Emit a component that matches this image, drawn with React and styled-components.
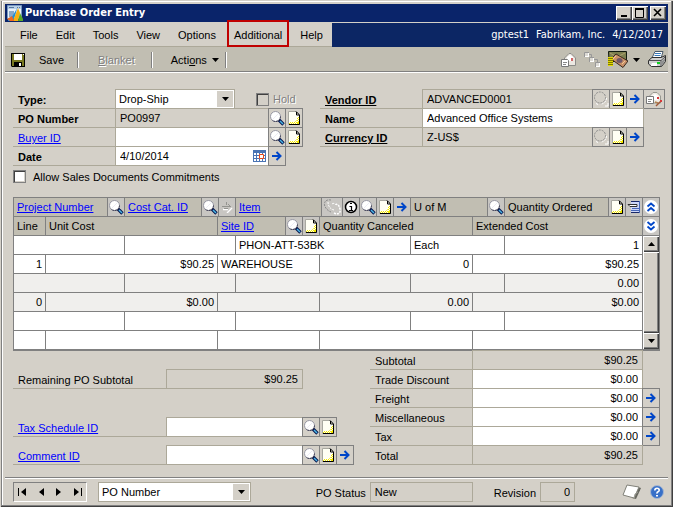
import React from 'react';
import styled, { createGlobalStyle, css } from 'styled-components';

const theme = {
  face: '#d4d0c8',
  bar: '#c1beb2',
  navy: '#0a246a',
  line: '#808080',
  softLine: '#aca899',
  link: '#0000ff',
  arrow: '#0046c8',
  alert: '#c00000',
};

const GlobalStyle = createGlobalStyle`
  * {
    box-sizing: border-box;
  }
  body {
    margin: 0;
    background: ${theme.face};
    color: #000;
    font: 11px/14px 'Liberation Sans', Arial, sans-serif;
  }
  button, input, select {
    font: inherit;
    color: inherit;
    margin: 0;
    padding: 0;
    border: 0;
    border-radius: 0;
    background: none;
  }
  svg {
    display: block;
    flex: none;
  }
`;

/* ---------- icons ---------- */

function Icon({ w = 16, h = 16, children }) {
  return (
    <svg width={w} height={h} viewBox={`0 0 ${w} ${h}`} fill="none" aria-hidden="true">
      {children}
    </svg>
  );
}

const SearchIcon = () => (
  <Icon>
    <path d="M9.5 9.5l5 5" stroke="#081850" strokeWidth="3.4" />
    <path d="M11 11l3 3" stroke="#48b8e8" strokeWidth="1.4" />
    <circle cx="6.5" cy="6.5" r="5" fill="#fff" stroke="#9898a4" />
    <path d="M11.5 6.5a5 5 0 0 1-5 5a5 5 0 0 1-3-1" stroke="#303048" strokeDasharray="2 0.6" />
    <path d="M4 9l5-5" stroke="#ececf4" />
  </Icon>
);

const GhostSearchIcon = () => (
  <Icon>
    <circle cx="7" cy="6.5" r="5.5" stroke="#8c8c8c" strokeDasharray="2 1" />
    <path d="M13.5 7a6 6 0 0 1-6 6" stroke="#fff" strokeDasharray="2 1" />
    <path d="M12 15h3v-3M3 12.5l2 1" stroke="#fff" />
  </Icon>
);

const ItemGhostIcon = () => (
  <Icon w={19} h={17}>
    <path d="M8 1C3 0 1 3 1.5 6S5 12 8 13" stroke="#8c8c8c" strokeDasharray="2 1" />
    <path d="M5 3c0 4 2 7 6 8M9 5c1-1 3-1 4 1" stroke="#fff" strokeDasharray="2 1" />
    <path d="M11 14c4 2 7 0 6-4s-2-4-4-5" stroke="#fff" strokeWidth="1.5" strokeDasharray="2 1" />
  </Icon>
);

const PageIcon = () => (
  <Icon w={12} h={14}>
    <path d="M0.5 0.5h8l3 3v10h-11z" fill="#fffff4" stroke="#a8a8a0" />
    <path d="M8 0.5l3.5 3.5v9.5H1" stroke="#000" />
    <path d="M8.5 1v3H11" stroke="#000" />
    <path d="M1 12.5h9M10.5 13V5" stroke="#f4e800" strokeDasharray="1 1" />
    <path d="M2 11.5h9M9.5 12V6" stroke="#f4e800" strokeDasharray="1 1" />
    <path d="M7 10.5h2M8.5 9v1" stroke="#f8f060" strokeDasharray="1 1" />
  </Icon>
);

const ArrowIcon = () => (
  <Icon w={10} h={10}>
    <path d="M0 5h8M4.5 1l4 4-4 4" stroke={theme.arrow} strokeWidth="2" />
  </Icon>
);

const GhostArrowIcon = () => (
  <Icon w={12} h={12}>
    <path d="M2 8.5h5M6 12l5-5" stroke="#fff" strokeWidth="1.4" />
    <path d="M5.5 1v3M1 5.5h8M3 7.5h4M7 3l3 3" stroke="#949490" />
  </Icon>
);

const InfoIcon = () => (
  <Icon w={14} h={14}>
    <circle cx="7" cy="7" r="5.5" fill="#fff" stroke="#000" strokeWidth="1.5" />
    <path d="M6 3.5h2M5.5 6.5h2v4M5 10.5h4" stroke="#000" strokeWidth="1.2" />
  </Icon>
);

const NoteIcon = () => (
  <Icon w={14} h={14}>
    <path d="M4 1h9v11H4z" fill="#cfd8f8" />
    <path d="M4 1.5h9M4 12.5h9" stroke="#182868" />
    <path d="M12.5 1v12M5 8.5h7M4 10.5h8" stroke="#4868b8" />
    <path d="M1 4.5h9v2H3z" fill="#fff" stroke="#303030" />
  </Icon>
);

const CalendarIcon = () => (
  <Icon w={13} h={12}>
    <path d="M0 0h13v12H0z" fill="#4a74b4" />
    <path d="M1 3h2v2H1zM4 3h2v2H4zM7 3h2v2H7zM10 3h2v2h-2zM1 6h2v2H1zM4 6h2v2H4zM10 6h2v2h-2zM1 9h2v2H1zM4 9h2v2H4zM7 9h2v2H7zM10 9h2v2h-2z" fill="#fff" />
    <path d="M6.5 4.5h4v4h-4z" fill="#fff" stroke="#e84818" />
  </Icon>
);

const ChevronsIcon = ({ down }) => (
  <Icon w={14} h={14}>
    <circle cx="7" cy="7" r="7" fill="#fff" />
    <path
      d={down ? 'M3.5 3L7 6l3.5-3M3.5 7.5l3.5 3 3.5-3' : 'M3.5 6.5L7 3.5l3.5 3M3.5 11L7 8l3.5 3'}
      stroke={theme.arrow}
      strokeWidth="1.8"
    />
  </Icon>
);

const Triangle = ({ dir = 'down' }) => (
  <Icon w={7} h={8}>
    {dir === 'down' && <path d="M0 2h7L3.5 6z" fill="#000" />}
    {dir === 'up' && <path d="M0 6h7L3.5 2z" fill="#000" />}
    {dir === 'left' && <path d="M6 0v8L1 4z" fill="#000" />}
    {dir === 'right' && <path d="M1 0v8l5-4z" fill="#000" />}
  </Icon>
);

const EndIcon = ({ dir }) => (
  <Icon w={9} h={8}>
    {dir === 'first' && <path d="M0 0h1v8H0zM8 0v8L3 4z" fill="#000" />}
    {dir === 'last' && <path d="M8 0h1v8H8zM1 0v8l5-4z" fill="#000" />}
  </Icon>
);

const AppIcon = () => (
  <Icon>
    <path d="M0.5 0.5h14v13h-14z" fill="#e8f0fa" stroke="#7898c0" />
    <path d="M1 1h13v3H1z" fill="#b8d0e8" />
    <path d="M2 2.5h5M10 2.5h1M12 2.5h1" stroke="#5878a0" />
    <path d="M2 6h5v6H2z" fill="#88a8c8" />
    <path d="M1 14c4-1 6-5 9-11-1 5-2 9-4 13H1z" fill="#2090d8" />
    <path d="M6 16l5-13 2 5-2 8z" fill="#f8b010" />
    <path d="M11 16l2-8 3 6v2z" fill="#58a828" />
    <path d="M0 14l5-3 2 5H3z" fill="#f06820" />
  </Icon>
);

const FloppyIcon = () => (
  <Icon w={14} h={14}>
    <path d="M0 0h14v14H1L0 13z" fill="#000" />
    <path d="M1 1h12v12H1z" fill="#787820" />
    <path d="M3 1h8v6H3z" fill="#fff" />
    <path d="M3 9h8v5H3z" fill="#000" />
    <path d="M8 10h2v3H8z" fill="#fff" />
    <path d="M12 1h1v1h-1z" fill="#fff" />
  </Icon>
);

const MailIcon = () => (
  <Icon w={15} h={14}>
    <path d="M3.5 5L8 0.5h2L14.5 5v7.5h-11z" fill="#ece8e2" stroke="#8c8c88" />
    <path d="M6 4l3-2 3 2v4H6z" fill="#fff" />
    <path d="M10 5h2v3h-2z" fill="#d06868" />
    <path d="M0.5 6.5h6l1 1v6h-7z" fill="#fff" stroke="#787878" />
    <path d="M2 9.5h4M2 11.5h3" stroke="#888" />
  </Icon>
);

const MailEditIcon = () => (
  <Icon w={16} h={16}>
    <path d="M3.5 5L7 1.5h4L14.5 5v7h-11z" fill="#f0ece4" stroke="#989890" />
    <path d="M6 5l3-2 3 2v4H6z" fill="#fff" />
    <path d="M0.5 5.5h7v7h-7z" fill="#fff" stroke="#787878" />
    <path d="M2 8.5h4M2 10.5h3" stroke="#888" />
    <path d="M11 6h2v2h-2z" fill="#d83838" />
    <path d="M9 11l3 1" stroke="#b08050" strokeWidth="1.5" />
    <path d="M10 15l5-5" stroke="#a05838" strokeWidth="1.5" />
    <path d="M14 9h2v2h-2z" fill="#d83838" />
  </Icon>
);

const WorkflowIcon = () => (
  <Icon w={16} h={15}>
    <path d="M5 2.5h2.5v3M10 7.5h3.5v3" stroke="#989898" />
    <path d="M1 1h4v4H1zM6 6h4v4H6zM12 11h4v4h-4z" fill="#fff" />
    <path d="M1 1h3v3H1zM6 6h3v3H6zM12 11h3v3h-3z" fill="#dcdad4" />
    <path d="M0.5 5V0.5H5M5.5 10V5.5H10M11.5 15v-4.5H16" stroke="#989898" />
  </Icon>
);

const MoneyIcon = () => (
  <Icon w={20} h={17}>
    <path d="M0.5 0.5h18v10H1z" fill="#7c8050" stroke="#101810" />
    <path d="M2 2l7 4 8-4" stroke="#b0a070" />
    <path d="M3 8l5-5 12 7-5 6.5z" fill="#c89068" stroke="#382820" />
    <ellipse cx="11.5" cy="9.5" rx="3" ry="2.5" fill="#705868" />
    <path d="M5 8l3-3M14 13l3-3" stroke="#f0c898" />
    <path d="M0 6h5v9H0z" fill="#e0d800" />
    <path d="M0 7.5h5M0 9.5h5M0 11.5h5M0 13.5h5" stroke="#807800" />
  </Icon>
);

const PrinterIcon = () => (
  <Icon w={18} h={17}>
    <path d="M4 7L7 0.5h8l-2 7z" fill="#fff" stroke="#485868" />
    <path d="M7 2.5h6M6.5 4.5h6" stroke="#3878b8" />
    <path d="M0.5 9.5L4 6.5h9l4.5-2v6l-4 5h-10L0.5 13z" fill="#d0d0d0" stroke="#303030" />
    <path d="M1 9.5h12v6M13 9.5L17 6" stroke="#505050" />
    <path d="M14 10l3-3v3l-3 4z" fill="#909090" />
    <path d="M3 14l1-2h5v3H3z" fill="#fff" />
    <path d="M9 11h3v2H9z" fill="#10d020" />
  </Icon>
);

const TiltedNoteIcon = () => (
  <Icon w={19} h={16}>
    <path d="M16 3l3 1-5 11-4-1z" fill="#686860" />
    <path d="M5 1l12 2-5 11-11-3z" fill="#fff" stroke="#808078" />
    <path d="M12 14l1-4 3-2" stroke="#a0a098" />
  </Icon>
);

const HelpIcon = () => (
  <Icon w={14} h={14}>
    <circle cx="7" cy="7" r="6.5" fill="#3870c8" stroke="#a8b8d0" />
    <path d="M4.8 5.5q0-2.3 2.2-2.3t2.2 2q0 1-1.2 1.6T7 8.6" stroke="#fff" strokeWidth="1.6" />
    <path d="M6 10h2v1.5H6z" fill="#fff" />
  </Icon>
);

/* ---------- window chrome ---------- */

const Window = styled.div`
  min-height: 100vh;
  padding: 4px 5px 5px;
  display: flex;
  flex-direction: column;
  background: ${theme.face};
  box-shadow: inset 1px 1px 0 ${theme.face}, inset -1px -1px 0 #404040,
    inset 2px 0 0 ${theme.line}, inset -2px -2px 0 ${theme.line}, inset 3px 2px 0 #fff;
`;

const TitleBar = styled.header`
  height: 18px;
  padding: 0 2px;
  display: flex;
  align-items: center;
  gap: 2px;
  background: ${theme.navy};
  color: #fff;
`;

const Title = styled.h1`
  margin: 0;
  flex: 1;
  font: bold 11px/16px 'DejaVu Sans Condensed', 'DejaVu Sans', sans-serif;
`;

const raised = css`
  background: ${theme.face};
  box-shadow: inset 1px 1px 0 #fff, inset -1px -1px 0 #404040, inset -2px -2px 0 ${theme.line};
`;

const WindowButtons = styled.div`
  display: flex;

  button:last-child {
    margin-left: 2px;
  }
`;

const WindowButton = styled.button`
  width: 16px;
  height: 14px;
  display: grid;
  place-items: center;
  ${raised}
`;

const MenuBar = styled.div`
  height: 24px;
  margin-top: 1px;
  display: flex;
  border-bottom: 1px solid ${theme.softLine};
`;

const Menu = styled.nav`
  display: flex;
  width: 327px;
  padding-left: 6px;
`;

const MenuItem = styled.button`
  position: relative;
  padding: 0 9px;

  ${({ $marked }) => $marked && css`
    &::after {
      content: '';
      position: absolute;
      inset: -3px 2px -1px;
      border: 2px solid ${theme.alert};
    }
  `}
`;

const Session = styled.div`
  flex: 1;
  margin-bottom: -1px;
  padding-right: 5px;
  display: flex;
  align-items: center;
  justify-content: flex-end;
  gap: 7px;
  background: #0c2664;
  color: #fff;
  font-family: 'DejaVu Sans Condensed', 'DejaVu Sans', sans-serif;
`;

const Toolbar = styled.div`
  height: 26px;
  padding: 0 2px 0 6px;
  display: flex;
  align-items: center;
  background: ${theme.bar};
  border-bottom: 1px solid #fff;
  box-shadow: inset 0 -1px 0 ${theme.line};
`;

const ToolButton = styled.button`
  display: flex;
  align-items: center;
  gap: 5px;

  &:disabled {
    color: ${theme.line};
    text-shadow: 1px 1px 0 #fff;
  }
`;

const SaveButton = styled(ToolButton)`
  gap: 14px;
`;

const Separator = styled.span`
  width: 2px;
  height: 16px;
  margin: 0 ${({ $after }) => $after}px 0 ${({ $before }) => $before}px;
  border-left: 1px solid ${theme.line};
  border-right: 1px solid #fff;
`;

const ToolIcons = styled.div`
  margin-left: auto;
  display: flex;
  align-items: center;
  gap: 8px;
`;

/* ---------- form ---------- */

const Main = styled.main`
  padding: 16px 8px 12px;
`;

const Form = styled.section`
  display: grid;
  grid-template-columns: 290fr 345fr;
  gap: 17px;
  margin-right: -5px;
`;

const Row = styled.div`
  height: 20px;
  margin-bottom: -1px;
  padding-right: ${({ $inset }) => $inset || 0}px;
  display: flex;

  &:last-child {
    margin-bottom: 0;
  }
`;

const Label = styled.label`
  width: ${({ $wide }) => ($wide ? 153 : 102)}px;
  flex: none;
  padding: 4px 0 0 5px;
  border-bottom: 1px solid ${theme.softLine};
  font-weight: ${({ $bold }) => ($bold ? 'bold' : 'normal')};
  text-decoration: ${({ $underline }) => ($underline ? 'underline' : 'none')};
  white-space: nowrap;
`;

const Link = styled.a`
  color: ${theme.link};
  white-space: nowrap;
`;

const Field = styled.div`
  flex: 1;
  min-width: 0;
  display: flex;
  align-items: center;
  border: 1px solid ${theme.softLine};
  background: ${({ $locked }) => ($locked ? theme.face : '#fff')};
`;

const TextInput = styled.input`
  width: 100%;
  min-width: 0;
  height: 18px;
  padding: 0 4px;
  outline: 0;
  text-align: ${({ $right }) => ($right ? 'right' : 'left')};
`;

const IconButton = styled.button`
  width: ${({ $width }) => $width || 18}px;
  flex: none;
  margin-left: -1px;
  display: grid;
  place-items: center;
  border: 1px solid ${theme.line};
  overflow: hidden;
`;

const PlainButton = styled.button`
  flex: none;
  padding-right: 2px;
`;

const SelectBox = styled.div`
  width: ${({ $width }) => $width}px;
  height: 20px;
  display: grid;
  border: 1px solid ${theme.softLine};
  background: #fff;
`;

const Select = styled.select`
  grid-area: 1 / 1;
  appearance: none;
  padding-left: 3px;
  outline: 0;
`;

const SelectArrow = styled.span`
  grid-area: 1 / 1;
  justify-self: end;
  width: 16px;
  margin: 1px;
  display: grid;
  place-items: center;
  background: ${theme.face};
  pointer-events: none;
`;

const CheckLabel = styled.label`
  display: flex;
  align-items: center;
  gap: ${({ $gap }) => $gap}px;
  ${({ $disabled }) => $disabled && css`
    margin-left: 21px;
    color: ${theme.line};
    text-shadow: 1px 1px 0 #fff;
  `}
`;

const CheckBox = styled.input`
  appearance: none;
  width: 13px;
  height: 13px;
  background: #fff;
  border: 1px solid ${theme.line};
  box-shadow: inset 1px 1px 0 #404040, inset -1px -1px 0 ${theme.face};

  &:disabled {
    background: ${theme.face};
  }
`;

const Commitments = styled.div`
  height: 13px;
  margin: 4px 0 14px;
  display: flex;
`;

/* ---------- line items ---------- */

const Grid = styled.table`
  width: 100%;
  table-layout: fixed;
  border-collapse: separate;
  border-spacing: 0;
  border: solid ${theme.line};
  border-width: 1px 0 1px 1px;

  th, td {
    height: 19px;
    padding: 0;
    border: solid ${theme.line};
    border-width: 0 1px 1px 0;
    text-align: left;
    font-weight: normal;
    white-space: nowrap;
  }
  th {
    background: ${theme.bar};
  }
`;

const Heading = styled.div`
  height: 18px;
  display: flex;
  align-items: center;

  > :first-child {
    flex: 1;
    padding-left: 3px;
  }
`;

const GridButton = styled.button`
  width: ${({ $width }) => $width || 17}px;
  height: 18px;
  display: grid;
  place-items: center;
  border-left: 1px solid ${theme.line};
  background: #c8c6c2;
  overflow: hidden;
`;

const ToggleButton = styled(GridButton)`
  width: 16px;
  border: 0;
`;

const Cell = styled.td`
  && {
    padding: 0 3px;
    background: ${({ $shaded }) => ($shaded ? '#f0efed' : '#fff')};
    text-align: ${({ $right }) => ($right ? 'right' : 'left')};
  }
`;

const ScrollBar = styled.div`
  height: 113px;
  display: flex;
  flex-direction: column;
`;

const ScrollButton = styled.button`
  height: 16px;
  display: grid;
  place-items: center;
  ${raised}
`;

const Thumb = styled.div`
  flex: 1;
  ${raised}
`;

/* ---------- totals and footer ---------- */

const Bottom = styled.section`
  margin-top: -1px;
  display: grid;
  grid-template-columns: 341fr 290fr;
  gap: 16px;
`;

const LeftFields = styled.div`
  padding-top: 19px;

  ${Row} {
    margin: 0 0 8px;
  }
  ${Row}:first-child {
    margin-bottom: 28px;
  }
  ${Row}:last-child {
    margin-bottom: 0;
  }
`;

const Footer = styled.footer`
  margin-top: auto;
  padding: 4px 4px 0 8px;
  display: flex;
  align-items: stretch;
  border-top: 1px solid ${theme.line};
  box-shadow: inset 0 1px 0 #fff;
`;

const Browse = styled.div`
  width: 74px;
  height: 20px;
  margin-right: 11px;
  display: flex;
  align-items: center;
  justify-content: space-between;
  padding: 0 4px;
  border: 1px solid;
  border-color: ${theme.line} #fff #fff ${theme.line};
`;

const Status = styled.div`
  margin-left: auto;
  display: flex;

  label {
    padding: 4px 4px 0 0;
  }
  label:nth-of-type(2) {
    padding-left: 21px;
  }
`;

const StatusField = styled(Field)`
  flex: none;
  width: ${({ $width }) => $width}px;
`;

const FooterIcons = styled.div`
  margin-left: 47px;
  display: flex;
  align-items: center;
  gap: 7px;
`;

const menuItems = ['File', 'Edit', 'Tools', 'View', 'Options', 'Additional', 'Help'];

const columnWidths = [32, 79, 93, 18, 84, 91, 62, 32, 138, 17];

const lines = [
  { item: 'PHON-ATT-53BK', unit: 'Each', ordered: '1', line: '1', cost: '$90.25', site: 'WAREHOUSE', canceled: '0', extended: '$90.25' },
  { ordered: '0.00', line: '0', cost: '$0.00', canceled: '0.00', extended: '$0.00' },
  {},
];

const totals = [
  { label: 'Subtotal', value: '$90.25', locked: true },
  { label: 'Trade Discount', value: '$0.00' },
  { label: 'Freight', value: '$0.00', expand: true },
  { label: 'Miscellaneous', value: '$0.00', expand: true },
  { label: 'Tax', value: '$0.00', expand: true },
  { label: 'Total', value: '$90.25', locked: true },
];

const icons = {
  search: SearchIcon,
  ghost: GhostSearchIcon,
  page: PageIcon,
  arrow: ArrowIcon,
  mail: MailEditIcon,
};

const iconNames = {
  search: 'Lookup',
  ghost: 'Lookup',
  page: 'Note',
  arrow: 'Open',
  mail: 'E-mail',
};

function FormRow({ id, label, value = '', bold, underline, link, locked, right, wide, inset, buttons = [], children }) {
  return (
    <Row $inset={inset}>
      <Label htmlFor={id} $bold={bold} $underline={underline} $wide={wide}>
        {link ? <Link href="#">{label}</Link> : label}
      </Label>
      <Field $locked={locked}>
        <TextInput id={id} defaultValue={value} readOnly={locked} $right={right} />
        {children}
      </Field>
      {buttons.map((name) => {
        const Glyph = icons[name];
        return (
          <IconButton key={name} aria-label={iconNames[name]} $width={name === 'mail' ? 22 : 18}>
            <Glyph />
          </IconButton>
        );
      })}
    </Row>
  );
}

function LineItems() {
  return (
    <Grid>
      <colgroup>
        {columnWidths.map((width, i) => <col key={i} width={width} />)}
      </colgroup>
      <thead>
        <tr>
          <th colSpan={2}>
            <Heading>
              <Link href="#">Project Number</Link>
              <GridButton aria-label="Lookup"><SearchIcon /></GridButton>
            </Heading>
          </th>
          <th colSpan={2}>
            <Heading>
              <Link href="#">Cost Cat. ID</Link>
              <GridButton aria-label="Lookup"><SearchIcon /></GridButton>
              <GridButton aria-label="Open" disabled><GhostArrowIcon /></GridButton>
            </Heading>
          </th>
          <th colSpan={2}>
            <Heading>
              <Link href="#">Item</Link>
              <GridButton aria-label="Lookup" disabled $width={21}><ItemGhostIcon /></GridButton>
              <GridButton aria-label="Info"><InfoIcon /></GridButton>
              <GridButton aria-label="Lookup"><SearchIcon /></GridButton>
              <GridButton aria-label="Note"><PageIcon /></GridButton>
              <GridButton aria-label="Open"><ArrowIcon /></GridButton>
            </Heading>
          </th>
          <th colSpan={2}>
            <Heading>
              <span>U of M</span>
              <GridButton aria-label="Lookup"><SearchIcon /></GridButton>
            </Heading>
          </th>
          <th>
            <Heading>
              <span>Quantity Ordered</span>
              <GridButton aria-label="Note"><PageIcon /></GridButton>
              <GridButton aria-label="Line note"><NoteIcon /></GridButton>
            </Heading>
          </th>
          <th><ToggleButton aria-label="Hide details"><ChevronsIcon /></ToggleButton></th>
        </tr>
        <tr>
          <th><Heading><span>Line</span></Heading></th>
          <th colSpan={2}><Heading><span>Unit Cost</span></Heading></th>
          <th colSpan={2}>
            <Heading>
              <Link href="#">Site ID</Link>
              <GridButton aria-label="Lookup"><SearchIcon /></GridButton>
              <GridButton aria-label="Note"><PageIcon /></GridButton>
            </Heading>
          </th>
          <th colSpan={2}><Heading><span>Quantity Canceled</span></Heading></th>
          <th colSpan={2}><Heading><span>Extended Cost</span></Heading></th>
          <th><ToggleButton aria-label="Show details"><ChevronsIcon down /></ToggleButton></th>
        </tr>
      </thead>
      <tbody>
        {lines.map((row, i) => {
          const shaded = i % 2 === 1;
          return (
            <React.Fragment key={i}>
              <tr>
                <Cell colSpan={2} $shaded={shaded} />
                <Cell colSpan={2} $shaded={shaded} />
                <Cell colSpan={2} $shaded={shaded}>{row.item}</Cell>
                <Cell colSpan={2} $shaded={shaded}>{row.unit}</Cell>
                <Cell $right $shaded={shaded}>{row.ordered}</Cell>
                {i === 0 && (
                  <td rowSpan={6}>
                    <ScrollBar>
                      <ScrollButton aria-label="Scroll up"><Triangle dir="up" /></ScrollButton>
                      <Thumb />
                      <ScrollButton aria-label="Scroll down"><Triangle /></ScrollButton>
                    </ScrollBar>
                  </td>
                )}
              </tr>
              <tr>
                <Cell $right $shaded={shaded}>{row.line}</Cell>
                <Cell colSpan={2} $right $shaded={shaded}>{row.cost}</Cell>
                <Cell colSpan={2} $shaded={shaded}>{row.site}</Cell>
                <Cell colSpan={2} $right $shaded={shaded}>{row.canceled}</Cell>
                <Cell colSpan={2} $right $shaded={shaded}>{row.extended}</Cell>
              </tr>
            </React.Fragment>
          );
        })}
      </tbody>
    </Grid>
  );
}

function App() {
  return (
    <Window>
      <GlobalStyle />
      <TitleBar>
        <AppIcon />
        <Title>Purchase Order Entry</Title>
        <WindowButtons>
          <WindowButton aria-label="Minimize">
            <Icon w={10} h={10}><path d="M2 8h6" stroke="#000" strokeWidth="2" /></Icon>
          </WindowButton>
          <WindowButton aria-label="Maximize">
            <Icon w={10} h={10}><path d="M0.5 1v8.5h8V1" stroke="#000" /><path d="M0 0h9v2H0z" fill="#000" /></Icon>
          </WindowButton>
          <WindowButton aria-label="Close">
            <Icon w={10} h={10}><path d="M1 1l7 7M8 1L1 8" stroke="#000" strokeWidth="1.6" /></Icon>
          </WindowButton>
        </WindowButtons>
      </TitleBar>

      <MenuBar>
        <Menu>
          {menuItems.map((item) => (
            <MenuItem key={item} $marked={item === 'Additional'}>{item}</MenuItem>
          ))}
        </Menu>
        <Session>
          <span>gptest1</span>
          <span>Fabrikam, Inc.</span>
          <span>4/12/2017</span>
        </Session>
      </MenuBar>

      <Toolbar>
        <SaveButton><FloppyIcon />Save</SaveButton>
        <Separator $before={13} $after={19} />
        <ToolButton disabled><span><u>B</u>lanket</span></ToolButton>
        <Separator $before={16} $after={18} />
        <ToolButton><span>Acti<u>o</u>ns</span><Triangle /></ToolButton>
        <Separator $before={6} $after={0} />
        <ToolIcons>
          <ToolButton aria-label="E-mail" disabled><MailIcon /></ToolButton>
          <ToolButton aria-label="Workflow" disabled><WorkflowIcon /></ToolButton>
          <ToolButton aria-label="Currency"><MoneyIcon /><Triangle /></ToolButton>
          <ToolButton aria-label="Print"><PrinterIcon /></ToolButton>
        </ToolIcons>
      </Toolbar>

      <Main>
        <Form>
          <div>
            <Row>
              <Label htmlFor="type" $bold>Type:</Label>
              <SelectBox $width={120}>
                <Select id="type"><option>Drop-Ship</option></Select>
                <SelectArrow><Triangle /></SelectArrow>
              </SelectBox>
              <CheckLabel $gap={4} $disabled>
                <CheckBox type="checkbox" disabled />
                Hold
              </CheckLabel>
            </Row>
            <FormRow id="po" label="PO Number" value="PO0997" bold locked buttons={['search', 'page']} />
            <FormRow id="buyer" label="Buyer ID" link buttons={['search', 'page']} />
            <FormRow id="date" label="Date" value="4/10/2014" bold inset={17} buttons={['arrow']}>
              <PlainButton aria-label="Calendar"><CalendarIcon /></PlainButton>
            </FormRow>
          </div>
          <div>
            <FormRow id="vendor" label="Vendor ID" value="ADVANCED0001" bold underline locked buttons={['ghost', 'page', 'arrow', 'mail']} />
            <FormRow id="name" label="Name" value="Advanced Office Systems" bold inset={21} />
            <FormRow id="currency" label="Currency ID" value="Z-US$" bold underline locked inset={21} buttons={['ghost', 'page', 'arrow']} />
          </div>
        </Form>
        <Commitments>
          <CheckLabel $gap={7}>
            <CheckBox type="checkbox" />
            Allow Sales Documents Commitments
          </CheckLabel>
        </Commitments>

        <LineItems />

        <Bottom>
          <LeftFields>
            <FormRow id="remaining" label="Remaining PO Subtotal" value="$90.25" wide locked right inset={51} />
            <FormRow id="tax-schedule" label="Tax Schedule ID" link wide inset={17} buttons={['search', 'page']} />
            <FormRow id="comment" label="Comment ID" link wide buttons={['search', 'page', 'arrow']} />
          </LeftFields>
          <div>
            {totals.map(({ label, value, locked, expand }) => (
              <FormRow
                key={label}
                id={`total-${label}`}
                label={label}
                value={value}
                locked={locked}
                right
                inset={expand ? 0 : 17}
                buttons={expand ? ['arrow'] : []}
              />
            ))}
          </div>
        </Bottom>
      </Main>

      <Footer>
        <Browse>
          <button aria-label="First"><EndIcon dir="first" /></button>
          <button aria-label="Previous"><Triangle dir="left" /></button>
          <button aria-label="Next"><Triangle dir="right" /></button>
          <button aria-label="Last"><EndIcon dir="last" /></button>
        </Browse>
        <SelectBox $width={153}>
          <Select aria-label="Sort by"><option>PO Number</option></Select>
          <SelectArrow><Triangle /></SelectArrow>
        </SelectBox>
        <Status>
          <label htmlFor="status">PO Status</label>
          <StatusField $locked $width={103}>
            <TextInput id="status" defaultValue="New" readOnly />
          </StatusField>
          <label htmlFor="revision">Revision</label>
          <StatusField $locked $width={35}>
            <TextInput id="revision" defaultValue="0" readOnly $right />
          </StatusField>
        </Status>
        <FooterIcons>
          <PlainButton aria-label="Record note"><TiltedNoteIcon /></PlainButton>
          <button aria-label="Help"><HelpIcon /></button>
        </FooterIcons>
      </Footer>
    </Window>
  );
}

export default App;
